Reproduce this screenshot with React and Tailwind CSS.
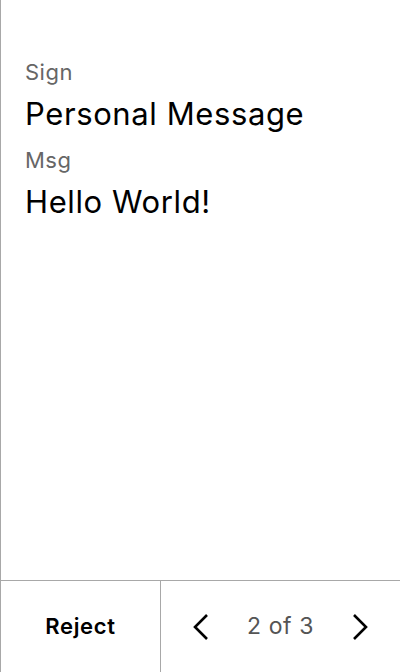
export default function App() {
  return (
    <div
      className="flex h-[672px] w-[400px] flex-col border-l border-[#a8a8a8] bg-white"
      style={{ fontFamily: "Inter, 'Liberation Sans', sans-serif" }}
    >
      <div className="flex-1 px-6 pt-[58px]">
        <div className="text-[22px] leading-[28px] tracking-[0.5px] text-[#666]">Sign</div>
        <div className="mt-[8px] text-[31px] leading-[40px] tracking-[0.6px] text-black">Personal Message</div>
        <div className="mt-[12px] text-[22px] leading-[28px] tracking-[0.5px] text-[#666]">Msg</div>
        <div className="mt-[8px] text-[31px] leading-[40px] tracking-[0.6px] text-black">Hello World!</div>
      </div>
      <div className="flex h-[92px] border-t border-[#a8a8a8]">
        <button className="flex w-[160px] items-center justify-center border-r border-[#a8a8a8] text-[22px] font-semibold tracking-[0.7px] text-black">
          Reject
        </button>
        <div className="flex flex-1 items-center justify-between px-[28px]">
          <svg width="24" height="28" viewBox="0 0 24 28" fill="none">
            <path d="M18 2 L6 14 L18 26" stroke="black" strokeWidth="2.6" />
          </svg>
          <span className="text-[23px] tracking-[0.6px] text-[#555]">2 of 3</span>
          <svg width="24" height="28" viewBox="0 0 24 28" fill="none">
            <path d="M6 2 L18 14 L6 26" stroke="black" strokeWidth="2.6" />
          </svg>
        </div>
      </div>
    </div>
  );
}
